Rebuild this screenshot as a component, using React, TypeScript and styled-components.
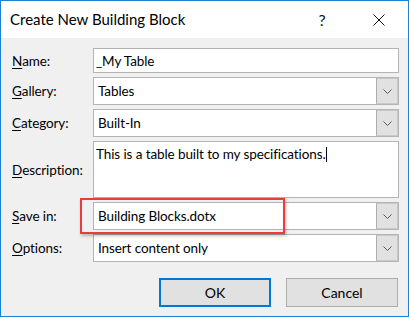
import React from "react";
import styled, { createGlobalStyle } from "styled-components";

const GlobalStyle = createGlobalStyle`
  html, body {
    margin: 0;
    padding: 0;
    background: #ffffff;
  }
  body {
    font-family: Lato, "Noto Sans", sans-serif;
    font-size: 13.5px;
    letter-spacing: -0.1px;
    color: #000000;
  }
`;

const Window = styled.div`
  position: relative;
  box-sizing: border-box;
  width: 409px;
  height: 317px;
  border: 1px solid #1a80d4;
  background: #f0f0f0;
  display: flex;
  flex-direction: column;
`;

const TitleBar = styled.div`
  height: 37px;
  background: #ffffff;
  display: flex;
  align-items: center;
  padding-left: 9px;
  flex-shrink: 0;
`;

const Title = styled.div`
  flex: 1;
  font-size: 15px;
  letter-spacing: 0;
  color: #000000;
  padding-bottom: 1px;
`;

const HelpGlyph = styled.div`
  width: 30px;
  text-align: center;
  font-size: 16px;
  color: #111111;
  margin-right: 27px;
`;

const CloseGlyph = styled.div`
  width: 30px;
  height: 37px;
  display: flex;
  align-items: center;
  justify-content: center;
  margin-right: 14px;
`;

const Body = styled.div`
  padding: 10px 9px 0 10px;
  display: flex;
  flex-direction: column;
`;

const Form = styled.div`
  display: grid;
  grid-template-columns: 82px 1fr;
  row-gap: 4px;
`;

const Label = styled.label`
  display: flex;
  align-items: center;
  padding-left: 1px;
  white-space: nowrap;
`;

const Key = styled.span`
  text-decoration: underline;
  text-underline-offset: 2px;
`;

const TextBox = styled.div<{ $h: number }>`
  box-sizing: border-box;
  height: ${(p) => p.$h}px;
  border: 1px solid #b4b4b4;
  background: #ffffff;
  display: flex;
  align-items: center;
  padding-left: 2px;
`;

const MemoBox = styled.div`
  box-sizing: border-box;
  height: 57px;
  border: 1px solid #b4b4b4;
  background: #ffffff;
  padding: 3px 2px 0 2px;
  line-height: 18px;
`;

const Caret = styled.span`
  display: inline-block;
  width: 1px;
  height: 15px;
  background: #000000;
  vertical-align: -3px;
`;

const Combo = styled.div<{ $h: number }>`
  box-sizing: border-box;
  height: ${(p) => p.$h}px;
  border: 1px solid #b4b4b4;
  background: #ffffff;
  display: flex;
`;

const ComboText = styled.div`
  flex: 1;
  display: flex;
  align-items: center;
  padding-left: 4px;
`;

const DropButton = styled.div`
  box-sizing: border-box;
  width: 22px;
  border: 1px solid #c8c8c8;
  border-left: 1px solid #adadad;
  background: #e1e1e1;
  display: flex;
  align-items: center;
  justify-content: center;
`;

const Buttons = styled.div`
  display: flex;
  justify-content: flex-end;
  gap: 15px;
  margin-top: 16px;
  padding-right: 1px;
`;

const Button = styled.button<{ $primary?: boolean }>`
  box-sizing: border-box;
  width: 112px;
  height: 29px;
  background: #e1e1e1;
  border: ${(p) => (p.$primary ? "2px solid #0078d7" : "1px solid #adadad")};
  font-family: inherit;
  font-size: 14px;
  color: #000000;
  padding: 0;
`;

const Highlight = styled.div`
  position: absolute;
  left: 79px;
  top: 197px;
  width: 205px;
  height: 36px;
  box-sizing: border-box;
  border: 2px solid #ec3b3b;
  box-shadow: 1px 2px 3px rgba(0, 0, 0, 0.25);
  pointer-events: none;
`;

const Chevron = () => (
  <svg width="9" height="5" viewBox="0 0 9 5">
    <path d="M0.5 0.5 L4.5 4.5 L8.5 0.5" fill="none" stroke="#5a5a5a" strokeWidth="1" />
  </svg>
);

const CloseIcon = () => (
  <svg width="12" height="12" viewBox="0 0 12 12">
    <path d="M0.5 0.5 L11.5 11.5 M11.5 0.5 L0.5 11.5" stroke="#111111" strokeWidth="1" />
  </svg>
);

const fields: { label: React.ReactNode; kind: "text" | "combo" | "memo"; value: string; h: number }[] = [
  { label: <><Key>N</Key>ame:</>, kind: "text", value: "_My Table", h: 25 },
  { label: <><Key>G</Key>allery:</>, kind: "combo", value: "Tables", h: 28 },
  { label: <><Key>C</Key>ategory:</>, kind: "combo", value: "Built-In", h: 28 },
  { label: <><Key>D</Key>escription:</>, kind: "memo", value: "This is a table built to my specifications.", h: 57 },
  { label: <><Key>S</Key>ave in:</>, kind: "combo", value: "Building Blocks.dotx", h: 28 },
  { label: <><Key>O</Key>ptions:</>, kind: "combo", value: "Insert content only", h: 28 },
];

export default function App() {
  return (
    <>
      <GlobalStyle />
      <Window>
        <TitleBar>
          <Title>Create New Building Block</Title>
          <HelpGlyph>?</HelpGlyph>
          <CloseGlyph>
            <CloseIcon />
          </CloseGlyph>
        </TitleBar>
        <Body>
          <Form>
            {fields.map((f, i) => (
              <React.Fragment key={i}>
                <Label>{f.label}</Label>
                {f.kind === "text" && <TextBox $h={f.h}>{f.value}</TextBox>}
                {f.kind === "memo" && (
                  <MemoBox>
                    {f.value}
                    <Caret />
                  </MemoBox>
                )}
                {f.kind === "combo" && (
                  <Combo $h={f.h}>
                    <ComboText>{f.value}</ComboText>
                    <DropButton>
                      <Chevron />
                    </DropButton>
                  </Combo>
                )}
              </React.Fragment>
            ))}
          </Form>
          <Buttons>
            <Button $primary>OK</Button>
            <Button>Cancel</Button>
          </Buttons>
        </Body>
        <Highlight />
      </Window>
    </>
  );
}
